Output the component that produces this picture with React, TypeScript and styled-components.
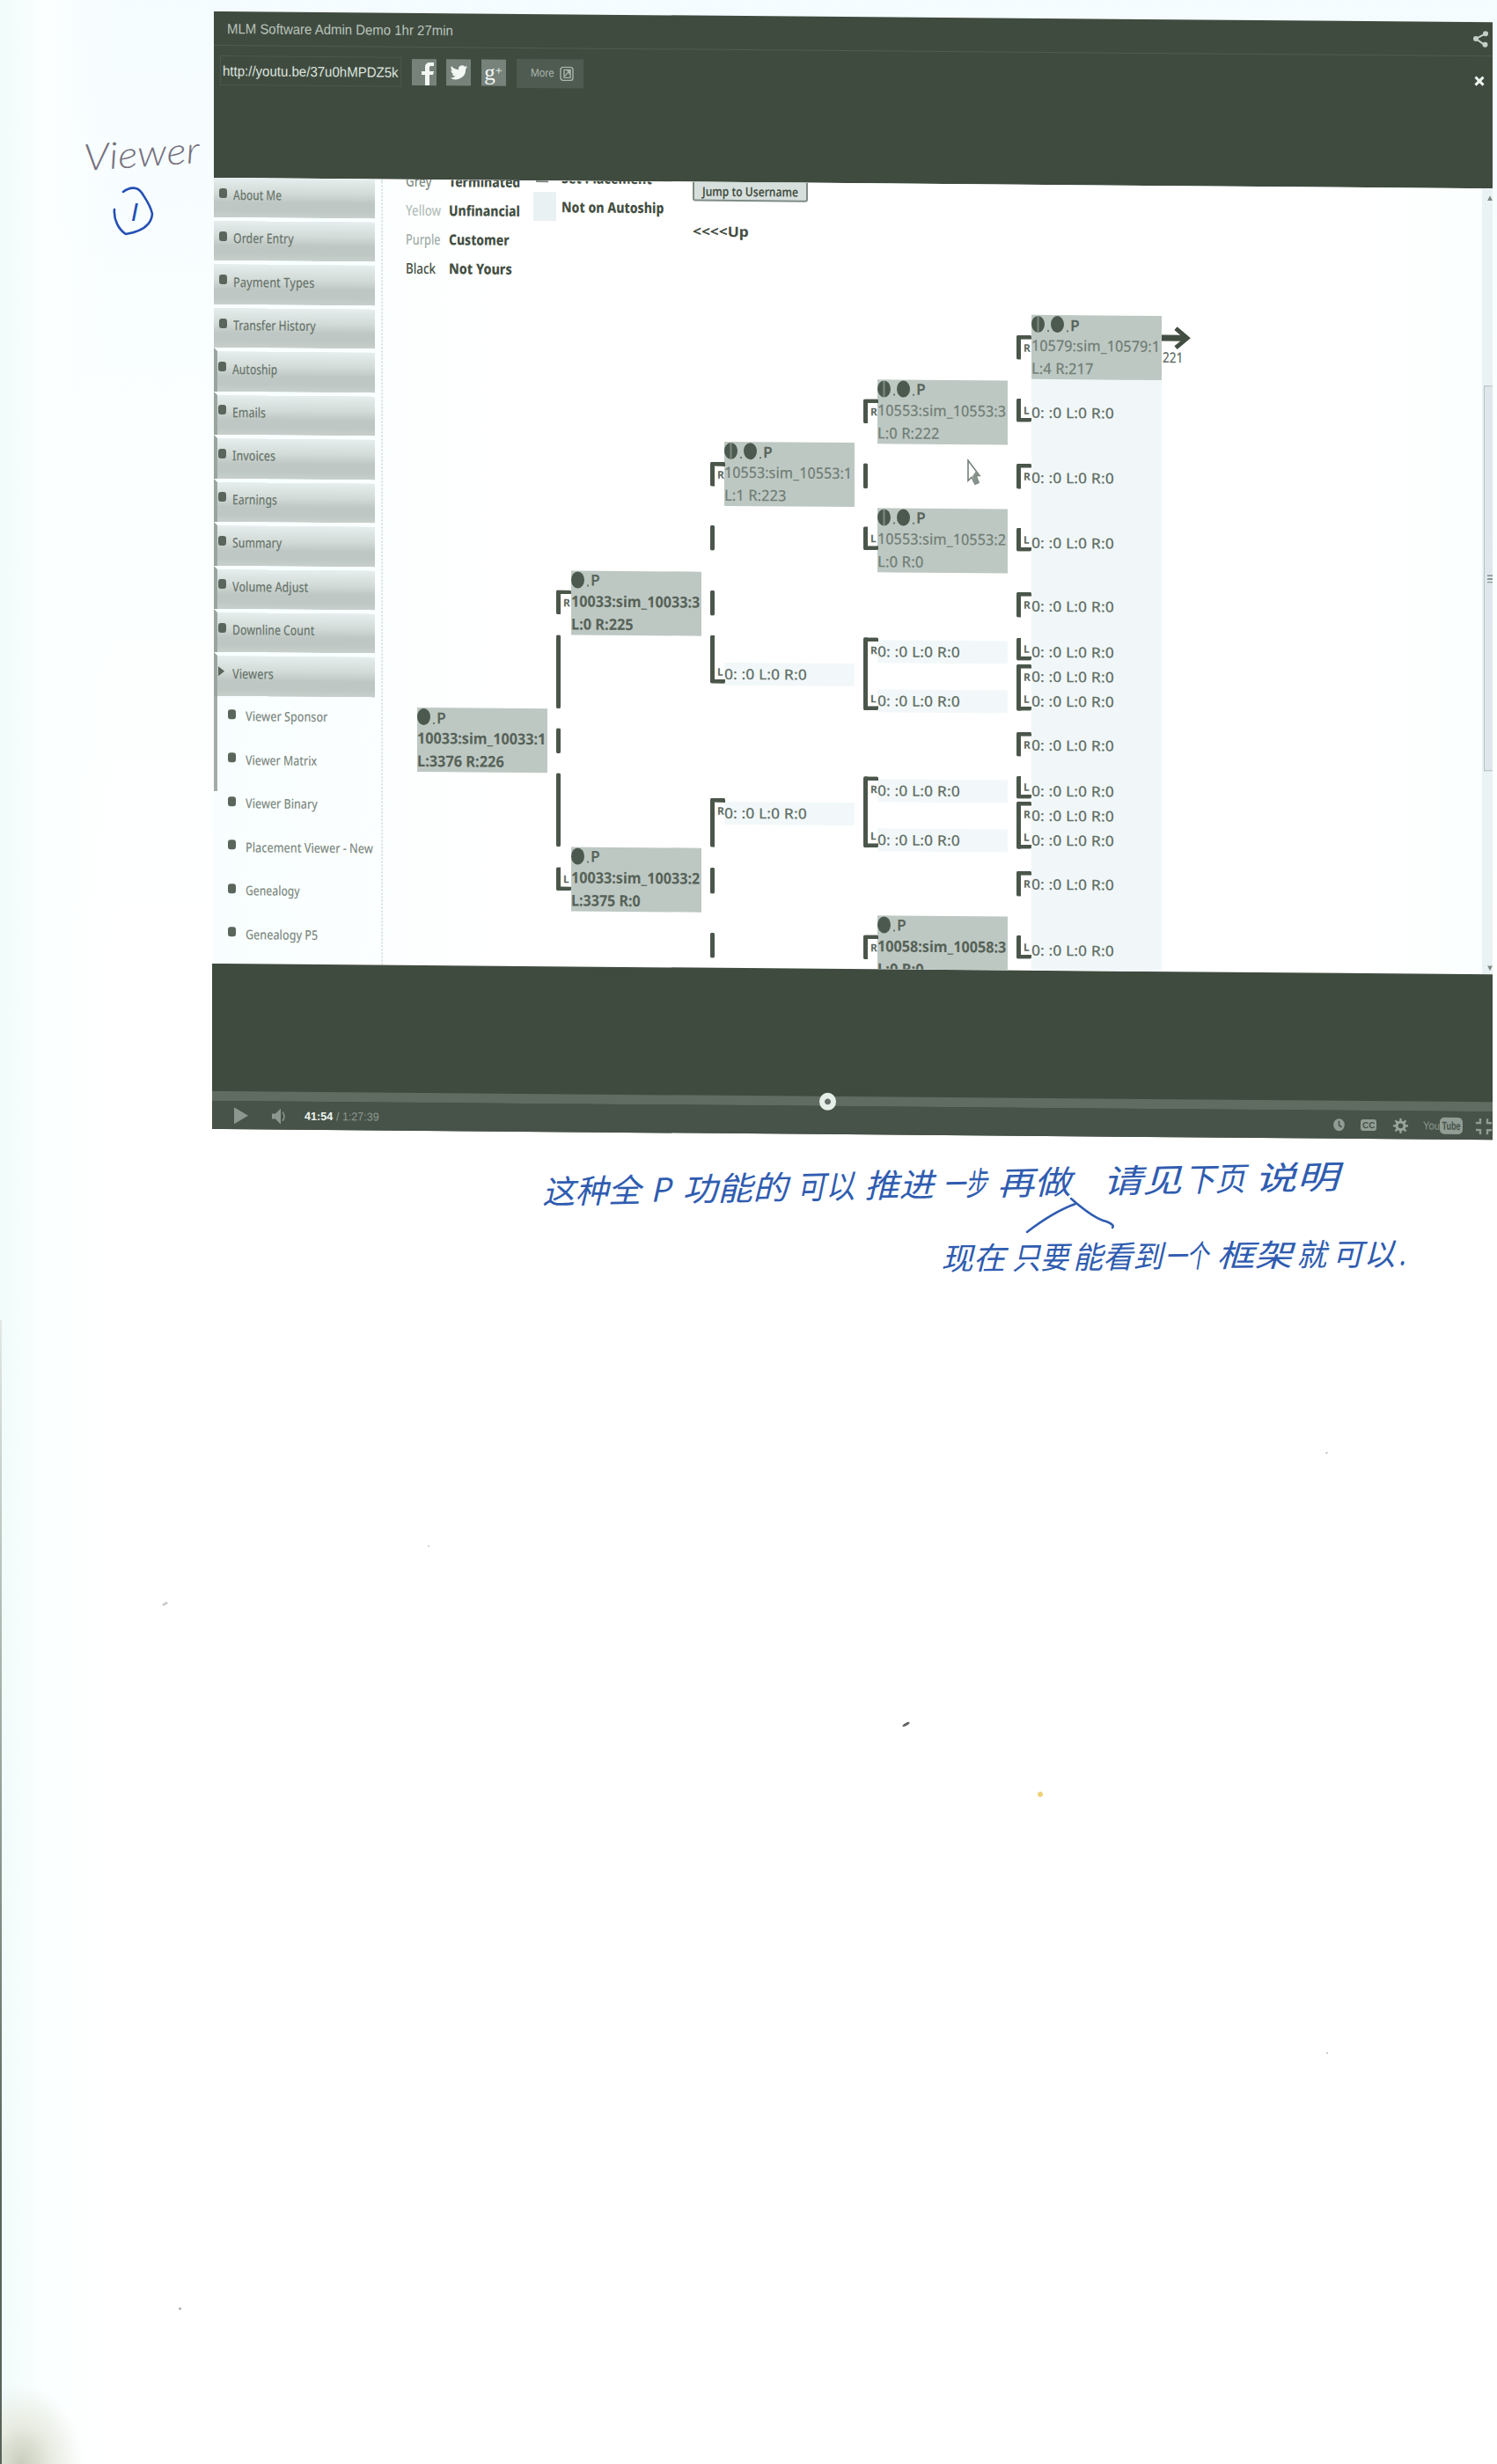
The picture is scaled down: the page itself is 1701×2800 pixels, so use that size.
import React, { useLayoutEffect, useRef, useState } from "react";
import styled, { createGlobalStyle } from "styled-components";

const ink = "#434e42";
const dark = "#404b40";
const pen = "#2f5cb0";

const Global = createGlobalStyle`
  *{box-sizing:border-box}
  body{margin:0;background:#fff;font-family:"Noto Sans","Open Sans",sans-serif;color:${ink}}
`;

const Sheet = styled.main`
  position: relative;
  width: 1701px;
  height: 2800px;
  overflow: hidden;
  display: grid;
  grid-template-columns: 243px 1453px;
  grid-template-rows: 1296px auto;
  background:
    radial-gradient(ellipse 70px 90px at 24px 2800px, #c9cdbd 0, #e8ece2 50%, transparent 100%),
    linear-gradient(90deg, #f0fbfa 0, #fbffff 50px, transparent 130px),
    linear-gradient(180deg, #f5fcff 0, #fbffff 500px, #fff 1100px);
`;

const FitBox = styled.span<{ $w: number }>`
  display: inline-block;
  flex: none;
  width: ${(p) => p.$w}px;
  white-space: pre;
`;
const FitInner = styled.span`
  display: inline-block;
  transform-origin: 0 50%;
`;

/* Squeezes or widens a run of text to a fixed measure. */
function Fit({ w, children }: { w: number; children: React.ReactNode }) {
  const ref = useRef<HTMLSpanElement>(null);
  const [scale, setScale] = useState(1);
  useLayoutEffect(() => {
    if (ref.current) setScale(w / ref.current.offsetWidth);
  }, [w]);
  return (
    <FitBox $w={w}>
      <FitInner ref={ref} style={{ transform: `scaleX(${scale})` }}>{children}</FitInner>
    </FitBox>
  );
}

/* ---------- margin note ---------- */
const Margin = styled.aside`
  padding: 149px 0 0 95px;
`;
const ViewerWord = styled.div`
  font: italic 300 42px/48px Lato, sans-serif;
  color: #77727f;
  transform: rotate(-4deg);
`;
const Circled = styled.div`
  position: relative;
  width: 54px;
  height: 58px;
  margin: 15px 0 0 31px;
  display: flex;
  align-items: center;
  justify-content: center;
  font: italic 300 30px/50px "Liberation Sans", sans-serif;
  color: #2450b4;
  svg { position: absolute; inset: 0; }
`;

/* ---------- player ---------- */
const Player = styled.section`
  height: 1270px;
  margin-top: 13px;
  display: flex;
  flex-direction: column;
  transform-origin: 0 0;
  transform: skewY(0.482deg);
`;
const TopBand = styled.header`
  height: 189px;
  background: ${dark};
  color: #b9c4bb;
  font: 16px/20px "Liberation Sans", Arial, sans-serif;
`;
const TitleRow = styled.div`
  display: flex;
  justify-content: space-between;
  height: 39px;
  padding: 10px 4px 0 15px;
  border-bottom: 1px solid #505c51;
`;
const ShareRow = styled.div`
  display: flex;
  align-items: center;
  height: 36px;
  margin-top: 10px;
`;
const UrlBox = styled.div`
  width: 206px;
  height: 34px;
  margin-left: 7px;
  padding-left: 2px;
  border: 1px solid #4c584d;
  line-height: 33px;
  color: #dde5df;
`;
const Social = styled.span`
  width: 28px;
  height: 30px;
  margin-left: 11.5px;
  background: #76827a;
  display: flex;
  align-items: center;
  justify-content: center;
  color: #f2f7f4;
  svg { display: block; }
`;
const GPlus = styled.span`
  font: 25px/26px "Liberation Serif", serif;
  sup { font-size: 14px; line-height: 0; vertical-align: 6px; }
`;
const More = styled.span`
  width: 76px;
  height: 33px;
  margin-left: 12px;
  padding: 0 11px 0 16px;
  display: flex;
  align-items: center;
  justify-content: space-between;
  background: #4f5b51;
  color: #aab5ad;
  font-size: 13px;
`;
const CloseIcon = styled.span`
  margin-left: auto;
  padding: 0 9px 1px 0;
  color: #eef4ef;
  svg { display: block; }
`;

const Screen = styled.div`
  height: 893px;
  display: flex;
  overflow: hidden;
  background: linear-gradient(90deg, #f8feff, #fff 340px, #fff 1300px, #fbffff);
`;
const Side = styled.nav`
  width: 192px;
  height: 893px;
  padding-right: 7px;
  border-right: 2px dotted #d5e2e4;
  overflow: hidden;
  display: flex;
  flex-direction: column;
`;
const MenuRow = styled.div<{ $first?: boolean; $strip?: boolean }>`
  flex: none;
  height: ${(p) => (p.$first ? 45 : 49.45)}px;
  border-top: ${(p) => (p.$first ? 0 : 4)}px solid #f9ffff;
  border-left: ${(p) => (p.$strip ? "4px solid #9aa59f" : "0 solid")};
  padding-left: ${(p) => (p.$strip ? 1 : 6)}px;
  padding-bottom: 7px;
  display: flex;
  align-items: center;
  gap: 7px;
  font-size: 15.5px;
  font-weight: 500;
  color: #6a766d;
  background: linear-gradient(180deg, #e6eeee 0, #d3dbd8 38%, #bec7c3 62%, #bec7c3 82%, #c8d0cc 100%) padding-box;
`;
const Dot = styled.i<{ $arrow?: boolean }>`
  flex: none;
  width: 9px;
  height: 11px;
  margin-bottom: 4px;
  background: #5a665b;
  border-radius: ${(p) => (p.$arrow ? 0 : 3)}px;
  clip-path: ${(p) => (p.$arrow ? "polygon(0 0,80% 50%,0 100%)" : "none")};
`;
const SubRow = styled.div<{ $strip?: number }>`
  flex: none;
  height: 49.5px;
  padding: 0 0 5px 16px;
  display: flex;
  align-items: center;
  gap: 11px;
  font-size: 15px;
  font-weight: 500;
  color: #7f8b83;
  background: linear-gradient(#a3ada8, #a3ada8) no-repeat 0 0 / 4px ${(p) => p.$strip || 0}px;
`;

const Canvas = styled.div`
  position: relative;
  flex: 1;
  overflow: hidden;
  line-height: 20px;
`;
const Legend = styled.div`
  display: flex;
  padding-left: 26px;
`;
const LegendTable = styled.div`
  display: grid;
  grid-template-columns: 49px 96px;
  grid-auto-rows: 33px;
  align-items: center;
  margin-top: -14.5px;
  font-size: 16.5px;
`;
const Name = styled.span<{ $c: string }>`
  color: ${(p) => p.$c};
  font-weight: 500;
`;
const Strong = styled.b`
  font-weight: 800;
`;
const Autoship = styled.div`
  display: grid;
  grid-template-columns: 32px 149px;
  grid-auto-rows: 33px;
  align-items: center;
  margin-top: -20px;
  font-size: 16.5px;
`;
const Swatch = styled.i<{ $dark?: boolean }>`
  width: ${(p) => (p.$dark ? 14 : 26)}px;
  height: ${(p) => (p.$dark ? 10 : 33)}px;
  margin-left: ${(p) => (p.$dark ? 3 : 0)}px;
  background: ${(p) => (p.$dark ? "#727e76" : "#eaf1f3")};
`;
const JumpBox = styled.div`
  font-size: 16px;
  font-weight: 700;
`;
const Jump = styled.button`
  display: block;
  width: 131px;
  height: 24px;
  padding: 0 0 0 9px;
  margin: -2px 0 24px;
  border: 2px solid #7f8c84;
  border-radius: 3px;
  background: #d7dfdc;
  color: ${ink};
  font: 600 14.5px/19px "Noto Sans", sans-serif;
  text-align: left;
`;

const At = styled.div<{ $x: number; $y: number }>`
  position: absolute;
  left: ${(p) => p.$x}px;
  top: ${(p) => p.$y}px;
`;
const Card = styled(At)<{ $soft?: boolean }>`
  width: 148px;
  height: 73px;
  background: #bec8c3;
  font-size: 17.5px;
  font-weight: ${(p) => (p.$soft ? 500 : 700)};
  line-height: 26px;
  color: ${(p) => (p.$soft ? "#728077" : "#566257")};
`;
const Marks = styled.div`
  display: flex;
  align-items: center;
  height: 21px;
  color: #59655b;
  font-weight: 600;
`;
const Blob = styled.i<{ $slash?: boolean }>`
  width: 15px;
  height: 19px;
  border-radius: 50%;
  background: ${(p) => (p.$slash ? "linear-gradient(90deg,#4c594e 40%,#7b887e 46%,#7b887e 54%,#4c594e 60%)" : "#4c594e")};
`;
const Point = styled.i`
  width: 2px;
  height: 2px;
  margin: 14px 2px 0 3px;
  background: #6b776d;
`;
const Cell = styled(At)<{ $shade: boolean }>`
  width: 148px;
  height: 26px;
  font-size: 16.5px;
  line-height: 26px;
  font-weight: 500;
  color: #647168;
  background: ${(p) => (p.$shade ? "#f2f8fa" : "transparent")};
`;
const LastColumn = styled(At)`
  width: 148px;
  height: 760px;
  background: #f1f7f9;
`;
const Wire = styled(At)<{ $h: number; $top?: boolean; $bottom?: boolean }>`
  width: ${(p) => (p.$top || p.$bottom ? 17 : 5)}px;
  height: ${(p) => p.$h}px;
  border: 0 solid #4b564b;
  border-left-width: 5px;
  border-top-width: ${(p) => (p.$top ? 5 : 0)}px;
  border-bottom-width: ${(p) => (p.$bottom ? 5 : 0)}px;
  border-radius: 2px;
`;
const Leg = styled(At)`
  font-size: 12px;
  line-height: 12px;
  font-weight: 700;
  color: #5e6a60;
`;
const ScrollBar = styled.div`
  width: 12px;
  height: 893px;
  display: flex;
  flex-direction: column;
  align-items: flex-end;
  background: #eaf2f3;
  padding: 8px 0 4px;
`;
const Tip = styled.i<{ $down?: boolean }>`
  width: 6px;
  height: 6px;
  background: #7d8982;
  clip-path: ${(p) => (p.$down ? "polygon(0 0,100% 0,50% 100%)" : "polygon(50% 0,100% 100%,0 100%)")};
`;
const Thumb = styled.div`
  width: 10px;
  height: 438px;
  margin: 210px 0 auto;
  border: 1px solid #b6c1c4;
  border-right: 0;
  background: #dfe7ec;
  display: flex;
  align-items: center;
  justify-content: flex-end;
  i { width: 6px; height: 9px; background: repeating-linear-gradient(#8d999a 0 2px, transparent 2px 4px); }
`;

const BottomBand = styled.footer`
  height: 188px;
  margin-left: -2px;
  background: ${dark};
  padding-top: 145px;
`;
const Progress = styled.div`
  height: 11px;
  background: #606c62;
  padding-left: 690px;
  display: flex;
  align-items: center;
`;
const Knob = styled.i`
  flex: none;
  width: 19px;
  height: 20px;
  border-radius: 50%;
  background: radial-gradient(circle, #647068 0 3px, #e6eeea 3.8px);
`;
const Controls = styled.div`
  height: 32px;
  display: flex;
  align-items: center;
  background: #475248;
  padding: 1px 0 0 25px;
  color: #8c988f;
  font: 13px/20px "Liberation Sans", Arial, sans-serif;
  svg { flex: none; display: block; }
`;
const Speaker = styled.svg`
  margin-left: 27px;
`;
const Clock = styled.div`
  display: flex;
  gap: 4px;
  margin-left: 20px;
  b { color: #eef4f0; }
`;
const Tools = styled.div`
  margin-left: auto;
  display: flex;
  align-items: center;
`;
const CC = styled.span`
  width: 18px;
  height: 13px;
  margin: 0 19px 0 18px;
  border-radius: 3px;
  background: #919d94;
  color: #49544a;
  font-size: 10px;
  font-weight: 700;
  line-height: 13px;
  text-align: center;
`;
const Tube = styled.span`
  display: flex;
  align-items: center;
  margin: 0 14px 0 17px;
  b {
    width: 26px;
    height: 19px;
    border-radius: 5px;
    background: #919d94;
    color: #49544a;
    line-height: 19px;
  }
`;

/* ---------- handwritten remarks ---------- */
const Remarks = styled.section`
  position: relative;
  grid-column: 2;
  padding: 26px 0 0 373px;
  font-family: "Noto Sans CJK SC", sans-serif;
  color: ${pen};
`;
const Line = styled.div<{ $size: number; $tilt: number; $indent?: number; $drop?: number }>`
  display: flex;
  align-items: center;
  height: 60px;
  margin-left: ${(p) => p.$indent || 0}px;
  margin-top: ${(p) => p.$drop || 0}px;
  font-size: ${(p) => p.$size}px;
  font-style: italic;
  font-weight: 400;
  line-height: 60px;
  transform: rotate(${(p) => p.$tilt}deg);
  transform-origin: 0 50%;
`;
const Space = styled.span<{ $w: number }>`
  flex: none;
  width: ${(p) => p.$w}px;
`;
const Caret = styled.svg`
  position: absolute;
  left: 920px;
  top: 63px;
`;
const Speck = styled.i<{ $x: number; $y: number; $w: number; $h: number; $c: string }>`
  position: absolute;
  left: ${(p) => p.$x}px;
  top: ${(p) => p.$y}px;
  width: ${(p) => p.$w}px;
  height: ${(p) => p.$h}px;
  border-radius: 50%;
  background: ${(p) => p.$c};
  transform: rotate(-30deg);
`;
const Edge = styled.i`
  position: absolute;
  left: 0;
  top: 1500px;
  width: 2px;
  height: 1300px;
  background: linear-gradient(#e2e8e4, #59635a 75%);
`;

const menu: [string, number][] = [
  ["About Me", 55], ["Order Entry", 69], ["Payment Types", 92], ["Transfer History", 94],
  ["Autoship", 51], ["Emails", 38], ["Invoices", 49], ["Earnings", 51], ["Summary", 56],
  ["Volume Adjust", 86], ["Downline Count", 93], ["Viewers", 47],
];
const sub: [string, number][] = [
  ["Viewer Sponsor", 93], ["Viewer Matrix", 81], ["Viewer Binary", 82],
  ["Placement Viewer - New", 145], ["Genealogy", 62], ["Genealogy P5", 82],
];

/* Diagram coordinates are kept in sheet space and brought back into the slanted canvas. */
const X0 = 435;
const px = (x: number) => x - X0;
const py = (x: number, y: number) => y - 202 - 0.0084 * (x - 243);

type CardT = { x: number; y: number; id: string; lr: string; w: number; lw: number; two?: boolean };
const cards: CardT[] = [
  { x: 474, y: 804, id: "10033:sim_10033:1", lr: "L:3376 R:226", w: 146, lw: 99 },
  { x: 649, y: 648, id: "10033:sim_10033:3", lr: "L:0 R:225", w: 146, lw: 71 },
  { x: 649, y: 962, id: "10033:sim_10033:2", lr: "L:3375 R:0", w: 146, lw: 79 },
  { x: 823, y: 502, id: "10553:sim_10553:1", lr: "L:1 R:223", w: 145, lw: 71, two: true },
  { x: 997, y: 431, id: "10553:sim_10553:3", lr: "L:0 R:222", w: 146, lw: 71, two: true },
  { x: 997, y: 577, id: "10553:sim_10553:2", lr: "L:0 R:0", w: 146, lw: 53, two: true },
  { x: 1172, y: 358, id: "10579:sim_10579:1", lr: "L:4 R:217", w: 146, lw: 71, two: true },
  { x: 997, y: 1040, id: "10058:sim_10058:3", lr: "L:0 R:0", w: 146, lw: 53 },
];
const cells: [number, number][] = [
  [823, 766], [823, 924], [997, 740], [997, 796], [997, 898], [997, 954],
  ...[469, 543, 617, 689, 741, 769, 797, 847, 899, 927, 955, 1005, 1080].map((y) => [1172, y] as [number, number]),
];
/* x, y, height, kind: R opens at the top, L closes at the bottom, B does both */
const wires: [number, number, number, string][] = [
  [632, 670, 28, "R"], [632, 721, 84, ""], [632, 827, 29, ""], [632, 878, 84, ""], [632, 985, 27, "L"],
  [807, 525, 28, "R"], [807, 597, 29, ""], [807, 671, 29, ""], [807, 722, 55, "L"],
  [807, 907, 56, "R"], [807, 986, 30, ""], [807, 1060, 29, ""],
  [981, 453, 28, "R"], [981, 526, 29, ""], [981, 598, 27, "L"], [981, 724, 83, "B"],
  [981, 882, 81, "B"], [981, 1062, 28, "R"],
  [1155, 381, 28, "R"], [1155, 453, 27, "L"], [1155, 527, 29, "R"], [1155, 600, 27, "L"], [1155, 673, 29, "R"],
  [1155, 725, 26, "L"], [1155, 755, 53, "B"], [1155, 832, 28, "R"], [1155, 882, 26, "L"],
  [1155, 911, 54, "B"], [1155, 990, 29, "R"], [1155, 1063, 27, "L"],
];

export default function App() {
  return (
    <>
      <Global />
      <Sheet>
        <Margin>
          <ViewerWord><Fit w={132}>Viewer</Fit></ViewerWord>
          <Circled>
            <svg width="54" height="58" viewBox="0 0 54 58" fill="none" stroke="#2450b4" strokeWidth="2.6" strokeLinecap="round">
              <path d="M14 6C22 0 30 0 35 7C40 15 45 21 47 31C46 44 35 51 17 54C9 49 3 38 4 26" />
            </svg>
            I
          </Circled>
        </Margin>

        <Player>
          <TopBand>
            <TitleRow>
              <Fit w={257}>MLM Software Admin Demo 1hr 27min</Fit>
              <svg width="19" height="19" viewBox="0 0 19 19" stroke="#c5cfc7" fill="#c5cfc7" strokeWidth="2">
                <path d="M15 3L4 9L14 16" fill="none" /><circle cx="15" cy="3" r="2" /><circle cx="4" cy="9" r="2" /><circle cx="14.500" cy="15.500" r="2" />
              </svg>
            </TitleRow>
            <ShareRow>
              <UrlBox><Fit w={200}>http://youtu.be/37u0hMPDZ5k</Fit></UrlBox>
              <Social>
                <svg width="26" height="30" viewBox="0 0 26 30" fill="currentColor"><path d="M14 30V18h-4v-4h4v-4c0-4 2-6 6-6h4v4h-3c-2 0-2 1-2 2v4h5l-1 4h-4v12z" /></svg>
              </Social>
              <Social>
                <svg width="21" height="22" viewBox="0 0 24 24" fill="currentColor"><path d="M23 5c-1 .5-1.700.7-2.600.8 1-.6 1.600-1.400 2-2.500-.9.500-1.900.9-2.900 1.100A4.600 4.600 0 0 0 11.600 8.600C7.800 8.400 4.400 6.600 2.200 3.800 1 5.900 1.600 8.600 3.600 9.900c-.7 0-1.400-.2-2-.6 0 2.200 1.500 4.100 3.600 4.600-.7.200-1.400.2-2 .1.600 1.800 2.300 3.100 4.200 3.100A9.300 9.300 0 0 1 .7 19 13 13 0 0 0 20.700 7.400C21.600 6.800 22.400 5.900 23 5z" /></svg>
              </Social>
              <Social><GPlus>g<sup>+</sup></GPlus></Social>
              <More>
                <Fit w={27}>More</Fit>
                <svg width="16" height="17" viewBox="0 0 16 17" fill="none" stroke="currentColor" strokeWidth="1.400"><rect x="1" y="1" width="14" height="15" rx="3" /><path d="M5 4v9h7V4zM6 11l5-6M8 5h3v4" /></svg>
              </More>
              <CloseIcon><svg width="12" height="12" viewBox="0 0 12 12" stroke="currentColor" strokeWidth="3"><path d="M1.500 1.500L10.500 10.500M10.500 1.500L1.500 10.500" /></svg></CloseIcon>
            </ShareRow>
          </TopBand>

          <Screen>
            <Side>
              {menu.map(([t, w], i) => (
                <MenuRow key={t} $first={i === 0} $strip={i > 3}>
                  <Dot $arrow={t === "Viewers"} /><Fit w={w}>{t}</Fit>
                </MenuRow>
              ))}
              {sub.map(([t, w], i) => (
                <SubRow key={t} $strip={i < 2 ? 50 : i === 2 ? 9 : 0}>
                  <Dot /><Fit w={w}>{t}</Fit>
                </SubRow>
              ))}
            </Side>
            <Canvas>
              <Legend>
                <LegendTable>
                  <Name $c="#7f8b83"><Fit w={30}>Grey</Fit></Name><Strong><Fit w={81}>Terminated</Fit></Strong>
                  <Name $c="#b4c0ba"><Fit w={40}>Yellow</Fit></Name><Strong><Fit w={81}>Unfinancial</Fit></Strong>
                  <Name $c="#a2aea8"><Fit w={40}>Purple</Fit></Name><Strong><Fit w={69}>Customer</Fit></Strong>
                  <Name $c={ink}><Fit w={34}>Black</Fit></Name><Strong><Fit w={72}>Not Yours</Fit></Strong>
                </LegendTable>
                <Autoship>
                  <Swatch $dark /><Strong><Fit w={103}>Set Placement</Fit></Strong>
                  <Swatch /><Strong><Fit w={116}>Not on Autoship</Fit></Strong>
                </Autoship>
                <JumpBox>
                  <Jump><Fit w={109}>Jump to Username</Fit></Jump>
                  <Fit w={64}>{"<<<<Up"}</Fit>
                </JumpBox>
              </Legend>

              <LastColumn $x={px(1172)} $y={py(1172, 358)} />
              {cards.map((c) => (
                <Card key={c.id} $x={px(c.x)} $y={py(c.x, c.y)} $soft={c.two}>
                  <Marks>{c.two && <><Blob $slash /><Point /></>}<Blob /><Point /><Fit w={11}>P</Fit></Marks>
                  <Fit w={c.w}>{c.id}</Fit>
                  <Fit w={c.lw}>{c.lr}</Fit>
                </Card>
              ))}
              {cells.map(([x, y]) => (
                <Cell key={`${x}-${y}`} $x={px(x)} $y={py(x, y) - 13} $shade={x < 1100}>
                  <Fit w={94}>0: :0 L:0 R:0</Fit>
                </Cell>
              ))}
              {wires.map(([x, y, h, k]) => (
                <React.Fragment key={`${x}-${y}`}>
                  <Wire $x={px(x)} $y={py(x, y)} $h={h} $top={k === "R" || k === "B"} $bottom={k === "L" || k === "B"} />
                  {(k === "R" || k === "B") && <Leg $x={px(x) + 8} $y={py(x, y) + 9}>R</Leg>}
                  {(k === "L" || k === "B") && <Leg $x={px(x) + 8} $y={py(x, y) + h - 19}>L</Leg>}
                </React.Fragment>
              ))}
              <At $x={px(1320)} $y={py(1320, 371)}>
                <svg width="33" height="26" viewBox="0 0 33 26" fill="none" stroke={ink}>
                  <path d="M0 13H27" strokeWidth="7" /><path d="M16 2L29 13L16 24" strokeWidth="5" />
                </svg>
              </At>
              <Cell $x={px(1321)} $y={py(1321, 406) - 13} $shade={false}><Fit w={23}>221</Fit></Cell>
              <At $x={px(1098)} $y={py(1098, 521)}>
                <svg width="17" height="32" viewBox="0 0 17 32"><path d="M2 2V25L6 21L10 29L14 27L11 19H15Z" fill="#fff" stroke="#76827b" strokeWidth="1.600" /><path d="M7 20L10 29L14 27L11 19H15L11 14Z" fill="#87938b" /></svg>
              </At>
            </Canvas>
            <ScrollBar><Tip /><Thumb><i /></Thumb><Tip $down /></ScrollBar>
          </Screen>

          <BottomBand>
            <Progress><Knob /></Progress>
            <Controls>
              <svg width="16" height="19" viewBox="0 0 16 19" fill="currentColor"><path d="M0 0L16 9.500L0 19z" /></svg>
              <Speaker width="17" height="18" viewBox="0 0 17 18" fill="currentColor"><path d="M0 6h4l6-6v18l-6-6H0z" /><path d="M12 4q4 5 0 10" fill="none" stroke="currentColor" strokeWidth="1.500" /></Speaker>
              <Clock><Fit w={32}><b>41:54</b></Fit><Fit w={49}>/ 1:27:39</Fit></Clock>
              <Tools>
                <svg width="13" height="15" viewBox="0 0 13 15"><ellipse cx="6.500" cy="7.500" rx="6.300" ry="7" fill="#919d94" /><path d="M6.500 3v5l3 2" stroke="#49544a" strokeWidth="1.600" fill="none" /></svg>
                <CC><Fit w={14}>CC</Fit></CC>
                <svg width="17" height="18" viewBox="0 0 18 18" fill="none" stroke="#9aa69d"><circle cx="9" cy="9" r="4.700" strokeWidth="3.200" /><path d="M9 0v4M9 14v4M0 9h4M14 9h4M2.600 2.600l3 3M12.400 12.400l3 3M2.600 15.400l3-3M12.400 5.600l3-3" strokeWidth="2.400" /></svg>
                <Tube><Fit w={19}>You</Fit><b><Fit w={26}> Tube </Fit></b></Tube>
                <svg width="20" height="20" viewBox="0 0 20 20" fill="none" stroke="#919d94" strokeWidth="2.400"><path d="M1 6h5V1M14 1v5h5M1 14h5v5M14 19v-5h5" /></svg>
              </Tools>
            </Controls>
          </BottomBand>
        </Player>

        <Remarks lang="zh">
          <Line $size={37} $tilt={-1.1}>
            <Fit w={112}>这种全</Fit><Space $w={11} /><Fit w={22}>P</Fit><Space $w={14} />
            <Fit w={120}>功能的</Fit><Space $w={10} /><Fit w={66}>可以</Fit><Space $w={11} />
            <Fit w={79}>推进</Fit><Space $w={11} /><Fit w={50}>一步</Fit><Space $w={11} />
            <Fit w={84}>再做</Fit><Space $w={36} /><Fit w={90}>请见</Fit><Space $w={3} />
            <Fit w={69}>下页</Fit><Space $w={10} /><Fit w={96}>说明</Fit>
          </Line>
          <Line $size={35} $tilt={-0.6} $indent={453} $drop={16}>
            <Fit w={73}>现在</Fit><Space $w={8} /><Fit w={64}>只要</Fit><Space $w={5} />
            <Fit w={102}>能看到</Fit><Space $w={3} /><Fit w={49}>一个</Fit><Space $w={9} />
            <Fit w={86}>框架</Fit><Space $w={5} /><Fit w={34}>就</Fit><Space $w={6} /><Fit w={72}>可以</Fit><Space $w={4} /><Fit w={8}>.</Fit>
          </Line>
          <Caret width="110" height="46" viewBox="0 0 110 46" fill="none" stroke={pen} strokeWidth="2.500" strokeLinecap="round">
            <path d="M4 41Q34 18 59 9M54 3Q80 26 94 29Q104 33 101 36" />
          </Caret>
        </Remarks>

        <Edge />
        <Speck $x={1025} $y={1958} $w={9} $h={3} $c="#5d625f" />
        <Speck $x={1179} $y={2036} $w={6} $h={6} $c="#ecd27a" />
        <Speck $x={184} $y={1821} $w={7} $h={3} $c="#c8cccb" />
        <Speck $x={203} $y={2622} $w={3} $h={3} $c="#a9aeab" />
        <Speck $x={1506} $y={1650} $w={3} $h={2} $c="#bfc5c2" />
        <Speck $x={486} $y={1756} $w={2} $h={2} $c="#c5cac8" />
        <Speck $x={1507} $y={2332} $w={2} $h={2} $c="#b9bfbc" />
      </Sheet>
    </>
  );
}
